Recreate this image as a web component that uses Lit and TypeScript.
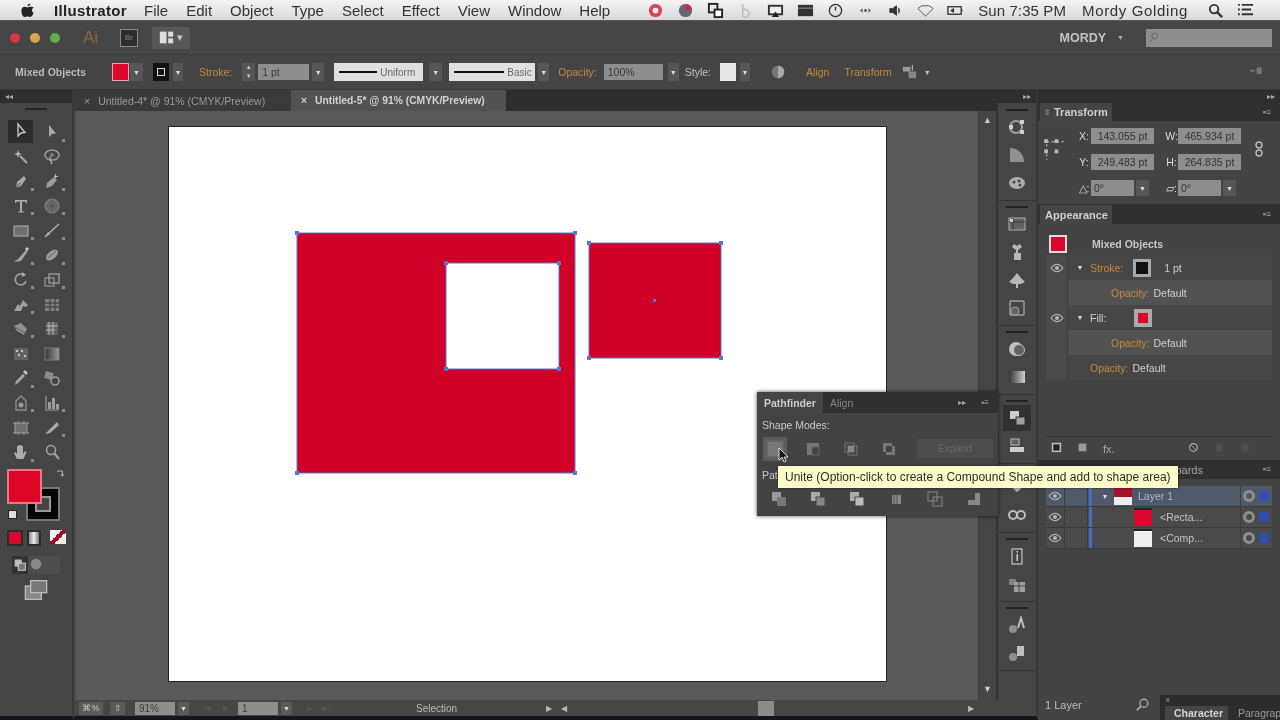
import { LitElement, html, css, svg } from 'lit';
import { customElement } from 'lit/decorators.js';

const ic = (body: unknown, size = 18) => html`<svg width=${size} height=${size} viewBox="0 0 18 18">${body}</svg>`;

// toolbox glyphs, left column then right column per row
const tools: { i: unknown; fly?: boolean; on?: boolean }[] = [
    { on: true, i: svg`<path d="M6 2v12l3-3 4-.5z" fill="none" stroke="#c4c4c4" stroke-width="1.4"/>` },
    { i: svg`<path d="M6 2v12l3-3 4-.5z" fill="#bdbdbd"/>`, fly: true },
    { i: svg`<path d="M8 8l7 7" stroke="#bbb" stroke-width="2"/><path d="M6 2l1 3 3 1-3 1-1 3-1-3-3-1 3-1z" fill="#ccc"/>` },
    { i: svg`<ellipse cx="9" cy="7" rx="7" ry="5" fill="none" stroke="#aaa" stroke-width="1.6"/><path d="M7 9c0 3 1 5 2 7" stroke="#bbb" stroke-width="1.6" fill="none"/><circle cx="9" cy="7" r="2" fill="#888"/>` },
    { i: svg`<path d="M4 15l1-6 7-6 2 3-5 7z" fill="#bbb"/><path d="M4 15l4-5" stroke="#444"/>`, fly: true },
    { i: svg`<path d="M3 15l1-5 7-6 3 3-5 6z" fill="#aaa"/><path d="M12 1h1v4h-1zM11 3h4v1h-4z" fill="#ccc"/>`, fly: true },
    { i: svg`<path d="M3 3h12v3h-1l-1-1.500H10v10h2v1H6v-1h2V4.500H5L4 6H3z" fill="#c0c0c0"/>`, fly: true },
    { i: svg`<circle cx="9" cy="9" r="7" fill="#777" stroke="#999"/><path d="M2 9h14M9 2v14M4 4l10 10M14 4L4 14" stroke="#555"/>`, fly: true },
    { i: svg`<rect x="2" y="4" width="14" height="10" fill="#777" stroke="#aaa" stroke-width="1.400"/>`, fly: true },
    { i: svg`<path d="M2 15L16 2" stroke="#c4c4c4" stroke-width="1.400"/><path d="M2 15l5-3-2-2z" fill="#ccc"/>`, fly: true },
    { i: svg`<path d="M2 16l4-3 8-9 2 1-7 10z" fill="#b5b5b5"/><path d="M13 3l2-2 2 2-2 2z" fill="#e0e0e0"/>`, fly: true },
    { i: svg`<ellipse cx="9" cy="9" rx="7" ry="4" transform="rotate(-40 9 9)" fill="#aaa"/><path d="M5 12l8-7" stroke="#666"/>`, fly: true },
    { i: svg`<path d="M14 10a5.500 5.500 0 1 1-2-6" fill="none" stroke="#a8a8a8" stroke-width="1.800"/><path d="M10 1l4 3-4 2z" fill="#bbb"/>`, fly: true },
    { i: svg`<rect x="2" y="7" width="9" height="8" fill="none" stroke="#999" stroke-width="1.400"/><rect x="6" y="3" width="10" height="9" fill="none" stroke="#aaa" stroke-width="1.400"/>`, fly: true },
    { i: svg`<path d="M2 15l4-7 2 2 3-6 5 5-2 2-3-1-2 5z" fill="#b0b0b0"/>`, fly: true },
    { i: svg`<rect x="2" y="3" width="14" height="12" fill="#888"/><path d="M2 7h14M2 11h14M7 3v12M12 3v12" stroke="#333"/>` },
    { i: svg`<path d="M2 6l7-3 6 6-3 6-7-4z" fill="#a0a0a0"/><path d="M3 7l10 6" stroke="#666"/>`, fly: true },
    { i: svg`<path d="M3 2h12v13H3z" fill="#666"/><path d="M6 2v13M10 2v13M3 6h12M3 10h9" stroke="#ccc"/>`, fly: true },
    { i: svg`<rect x="2" y="3" width="14" height="12" fill="#6a6a6a"/><path d="M4 5h2v2H4zM9 5h2v2H9zM6 9h2v2H6zM12 10h2v2h-2z" fill="#ddd"/>` },
    { i: svg`<defs><linearGradient id="g1"><stop offset="0" stop-color="#333"/><stop offset="1" stop-color="#aaa"/></linearGradient></defs><rect x="2" y="3" width="14" height="12" fill="url(#g1)" stroke="#888"/>` },
    { i: svg`<path d="M3 16l1-4 7-7 2 2-7 7z" fill="#b8b8b8"/><path d="M11 3l2-2 3 3-2 2z" fill="#d8d8d8"/>`, fly: true },
    { i: svg`<rect x="2" y="3" width="8" height="7" transform="rotate(15 6 6)" fill="#999"/><circle cx="12" cy="12" r="4" fill="none" stroke="#aaa" stroke-width="1.600"/>` },
    { i: svg`<path d="M9 2l5 5v9H4V7z" fill="none" stroke="#999" stroke-width="1.400"/><circle cx="9" cy="11" r="2.500" fill="#aaa"/>`, fly: true },
    { i: svg`<path d="M3 2v14h13" fill="none" stroke="#aaa" stroke-width="1.200"/><path d="M5 8h3v7H5zM9 4h3v11H9zM13 10h3v5h-3z" fill="#aaa"/>`, fly: true },
    { i: svg`<rect x="3" y="4" width="12" height="10" fill="#777" stroke="#aaa"/><path d="M1 4h3M14 4h3M1 14h3M14 14h3M6 2v3M12 2v3M6 13v3M12 13v3" stroke="#aaa"/>` },
    { i: svg`<path d="M2 15L14 3l2 3-9 8z" fill="#bbb"/>`, fly: true },
    { i: svg`<path d="M5 16l-3-6 1-1 2 2V3h1.500v6V2H8v7V2h1.500v7V3H11v8l2-3 1.500 1-3 7z" fill="#c0c0c0"/>`, fly: true },
    { i: svg`<circle cx="8" cy="7" r="4.500" fill="none" stroke="#b5b5b5" stroke-width="1.500"/><path d="M11 10l5 6" stroke="#b5b5b5" stroke-width="2"/>` },
];

// panel dock groups
const dockGroups: unknown[][] = [
    [svg`<circle cx="8" cy="9" r="6" fill="none" stroke="#aaa" stroke-width="2"/><rect x="12" y="2" width="4" height="4" fill="#ddd"/><rect x="12" y="12" width="4" height="4" fill="#ddd"/><rect x="1" y="7" width="4" height="4" fill="#ddd"/>`,
     svg`<path d="M2 2c8 0 14 6 14 14H2z" fill="#999"/>`,
     svg`<ellipse cx="9" cy="9" rx="8" ry="6" fill="#bbb"/><circle cx="6" cy="8" r="1.500" fill="#444"/><circle cx="11" cy="7" r="1.500" fill="#444"/><circle cx="12" cy="11" r="1.500" fill="#444"/>`],
    [svg`<rect x="1" y="3" width="16" height="12" fill="#666" stroke="#bbb"/><path d="M1 7h16M5 3v12" stroke="#333"/><rect x="2" y="4" width="3" height="3" fill="#ddd"/>`,
     svg`<path d="M4 4l2-3 3 2 3-2 2 3-4 3v3h3v7H6v-7h2V7z" fill="#c4c4c4"/>`,
     svg`<path d="M9 2l4 5 4 4-4 2H5l-4-2 4-4zM8 13h2v4H8z" fill="#c4c4c4"/>`,
     svg`<rect x="2" y="2" width="14" height="14" rx="1" fill="none" stroke="#aaa" stroke-width="1.400"/><circle cx="7" cy="12" r="4" fill="#666" stroke="#aaa"/>`],
    [svg`<circle cx="8" cy="9" r="7" fill="#cfcfcf"/><circle cx="11" cy="10" r="5.500" fill="#666" stroke="#ccc"/>`,
     svg`<defs><linearGradient id="g2"><stop offset="0" stop-color="#333"/><stop offset="1" stop-color="#ddd"/></linearGradient></defs><rect x="1" y="3" width="16" height="12" fill="url(#g2)"/>`],
    [svg`<rect x="2" y="2" width="9" height="8" fill="#ddd"/><rect x="8" y="8" width="9" height="8" fill="#aaa" stroke="#333"/>`,
     svg`<rect x="3" y="2" width="8" height="6" fill="#666" stroke="#ccc"/><rect x="2" y="10" width="14" height="5" fill="#ddd"/>`],
    [svg`<path d="M2 8h14L9 14z" fill="#bbb"/>`,
     svg`<circle cx="5" cy="9" r="4" fill="none" stroke="#ccc" stroke-width="2"/><circle cx="13" cy="9" r="4" fill="none" stroke="#ccc" stroke-width="2"/>`],
    [svg`<path d="M4 2h10v15H4z" fill="none" stroke="#bbb" stroke-width="1.400"/><path d="M8.500 7h1.500v7H8.500zM8.500 4h1.500v1.500H8.500z" fill="#ddd"/>`,
     svg`<rect x="1" y="4" width="7" height="6" fill="#888"/><rect x="6" y="7" width="11" height="10" fill="#aaa"/><path d="M6 11h11M11 7v10" stroke="#444"/>`],
    [svg`<circle cx="5" cy="13" r="4" fill="#999"/><path d="M10 12l3-10 3 10" fill="none" stroke="#ccc" stroke-width="2"/>`,
     svg`<circle cx="5" cy="13" r="4" fill="#999"/><rect x="9" y="2" width="7" height="10" fill="#ccc"/>`],
];

const pfTop = [
    svg`<rect x="2" y="2" width="14" height="14" fill="#777"/>`,
    svg`<path d="M3 3h12v4H8v8H3z" fill="#777"/><rect x="8" y="7" width="7" height="8" fill="none" stroke="#666"/>`,
    svg`<rect x="3" y="3" width="9" height="9" fill="none" stroke="#777"/><rect x="6" y="6" width="9" height="9" fill="none" stroke="#777"/><rect x="6" y="6" width="6" height="6" fill="#888"/>`,
    svg`<path d="M3 3h9v3H6v6H3zM12 6h3v9H6v-3h6z" fill="#777"/>`,
];
const pfBottom = [
    svg`<rect x="2" y="2" width="9" height="9" fill="#999"/><rect x="7" y="7" width="9" height="9" fill="#777"/>`,
    svg`<rect x="2" y="2" width="9" height="9" fill="#aaa"/><rect x="7" y="7" width="9" height="9" fill="#888" stroke="#444"/>`,
    svg`<rect x="2" y="2" width="9" height="9" fill="#aaa"/><rect x="7" y="7" width="9" height="9" fill="#bbb" stroke="#444"/>`,
    svg`<rect x="5" y="5" width="9" height="9" fill="#888"/><path d="M7 5v9M10 5v9" stroke="#555"/>`,
    svg`<rect x="2" y="2" width="9" height="9" fill="none" stroke="#888"/><rect x="7" y="7" width="9" height="9" fill="none" stroke="#888"/>`,
    svg`<path d="M10 3h5v12H3v-5h7z" fill="#888"/>`,
];

const eye = svg`<path d="M1 7c4-5 8-5 12 0-4 5-8 5-12 0z" fill="none" stroke="#b5b5b5" stroke-width="1.100"/><circle cx="7" cy="7" r="2" fill="#b5b5b5"/>`;
const eyeIcon = html`<svg width="14" height="14" viewBox="0 0 14 14">${eye}</svg>`;

@customElement('app-root')
export class AppRoot extends LitElement {
    static styles = css`
        :host {
            display: block;
            position: relative;
            width: 1280px;
            height: 720px;
            overflow: hidden;
            background: #424242;
            font-family: 'Liberation Sans', Arial, sans-serif;
            font-size: 11px;
            color: #c8c8c8;
            filter: blur(0.7px);
        }
        svg { display: block; flex: none; }

        /* mac menu bar */
        .menu {
            display: flex;
            align-items: center;
            height: 21px;
            padding-left: 19px;
            background: linear-gradient(#f4f4f4, #d9d9d9);
            border-bottom: 1px solid #555;
            box-sizing: border-box;
            color: #222;
            font-size: 15px;
        }
        .menu .apple { width: 27px; margin-right: 8px; }
        .menu b { margin-right: 17px; letter-spacing: .35px; }
        .menu span { margin-right: 18px; color: #333; }
        .extras { display: flex; align-items: center; margin-left: auto; padding-right: 26px; gap: 13px; }
        .extras span { margin: 0; }
        .extras .who { margin-left: 3px; margin-right: 6px; letter-spacing: .65px; }
        .extras .clock { margin-left: 1px; letter-spacing: .1px; }

        /* app bar + control bar */
        .appbar {
            display: flex;
            align-items: center;
            height: 34px;
            padding-left: 10px;
            background: #464646;
            border-bottom: 1px solid #3a3a3a;
            box-sizing: border-box;
        }
        .light { width: 10px; height: 10px; border-radius: 50%; margin-right: 10px; }
        .light.r { background: #d8364a; }
        .light.y { background: #d9a54c; }
        .light.g { background: #5fb04a; }
        .ai { margin-left: 13px; color: #8a6a42; font-size: 17px; width: 28px; }
        .bridge {
            width: 16px;
            height: 16px;
            border: 1px solid #888;
            background: #2d2d2d;
            margin-left: 9px;
            color: #888;
            font-size: 8px;
            line-height: 16px;
            text-align: center;
        }
        .arrange {
            display: flex;
            align-items: center;
            justify-content: center;
            gap: 3px;
            width: 38px;
            height: 22px;
            margin-left: 14px;
            background: #585858;
        }
        .workspace { margin-left: auto; color: #c4c4c4; font-weight: bold; font-size: 12.500px; }
        .workspace-caret { margin-left: 11px; color: #aaa; font-size: 7px; }
        .search {
            width: 126px;
            height: 18px;
            margin: 0 8px 0 22px;
            background: #8e8e8e;
            color: #444;
            display: flex;
            align-items: center;
            padding-left: 3px;
            box-sizing: border-box;
        }

        .control {
            display: flex;
            align-items: center;
            height: 35px;
            padding-left: 15px;
            background: #444;
            border-bottom: 1px solid #383838;
            box-sizing: border-box;
            white-space: nowrap;
        }
        .mixed { width: 97px; font-size: 10.500px; font-weight: bold; color: #bbb; }
        .link { color: #c58a3e; font-size: 10.500px; }
        .lbl { font-size: 10.500px; color: #c4c4c4; }
        .swatch { width: 17px; height: 18px; background: #d9072c; border: 1px solid #e8a0ac; box-sizing: border-box; }
        .blackbox {
            width: 16px;
            height: 18px;
            background: #111;
            display: flex;
            align-items: center;
            justify-content: center;
        }
        .blackbox i { width: 6px; height: 6px; border: 1px solid #ddd; }
        .dd {
            display: flex;
            align-items: center;
            justify-content: center;
            height: 18px;
            background: #565656;
            color: #ddd;
            font-size: 7px;
            font-style: normal;
        }
        .field { height: 16px; line-height: 16px; background: #8e8e8e; color: #3a3a3a; padding-left: 4px; box-sizing: border-box; font-size: 10.500px; }
        .profile {
            display: flex;
            align-items: center;
            gap: 3px;
            height: 18px;
            padding-left: 5px;
            background: #e0e0e0;
            color: #666;
            font-size: 10px;
            box-sizing: border-box;
        }
        .profile i { height: 2px; background: #111; }
        .styleswatch { width: 16px; height: 18px; background: #e8e8e8; }
        .spin { width: 13px; height: 18px; background: #555; color: #ccc; font-size: 6px; line-height: 9px; text-align: center; }
        .w10 { width: 10px; } .w11 { width: 11px; } .w12 { width: 12px; } .w13 { width: 13px; }
        .w38 { width: 38px; } .w50 { width: 50px; } .w51 { width: 51px; } .w59 { width: 59px; } .w86 { width: 86px; } .w89 { width: 89px; }
        .tiny { font-size: 7px; }
        .m1 { margin-left: 1px; } .m3 { margin-left: 3px; } .m4 { margin-left: 4px; } .m5 { margin-left: 5px; }
        .m6 { margin-left: 6px; } .m7 { margin-left: 7px; } .m9 { margin-left: 9px; } .m10 { margin-left: 10px; }
        .m15 { margin-left: 15px; } .m16 { margin-left: 16px; } .m20 { margin-left: 20px; } .m21 { margin-left: 21px; }
        .endmenu { margin-left: auto; margin-right: 15px; color: #999; }

        /* main columns */
        .main { display: flex; height: 630px; }
        .strip { height: 13px; background: #2e2e2e; color: #aaa; font-size: 8px; line-height: 13px; padding: 0 5px; box-sizing: border-box; flex: none; }
        .tools {
            width: 74px;
            flex: none;
            display: flex;
            flex-direction: column;
            align-items: center;
            background: #454545;
            border-right: 2px solid #383838;
            border-bottom: 4px solid #14141c;
            box-sizing: border-box;
        }
        .tools .strip { align-self: stretch; }
        .grip { width: 22px; height: 2px; background: #222; margin: 5px 0 10px; flex: none; }
        .toolgrid { display: grid; grid-template-columns: 31px 31px; grid-auto-rows: 24.620px; }
        .tool { position: relative; display: flex; align-items: center; justify-content: center; opacity: .85; }
        .tool.on { background: #2c2c2c; margin: 0 3px 2px; opacity: 1; }
        .tool.fly::after {
            content: '';
            position: absolute;
            right: 2px;
            bottom: 3px;
            width: 3px;
            height: 3px;
            background: #999;
        }
        .fillstroke { position: relative; width: 62px; height: 56px; margin-top: 4px; flex: none; }
        .fs-stroke {
            position: absolute;
            left: 21px;
            top: 18px;
            width: 34px;
            height: 34px;
            background: #050505;
            border: 2px solid #777;
            box-sizing: border-box;
            display: flex;
            align-items: center;
            justify-content: center;
        }
        .fs-stroke i { width: 12px; height: 12px; background: #454545; border: 2px solid #999; }
        .fs-fill {
            position: absolute;
            left: 2px;
            top: 0;
            width: 35px;
            height: 35px;
            background: #dc0528;
            border: 2px solid #e87a88;
            box-sizing: border-box;
        }
        .fs-swap { position: absolute; right: 0; top: 0; }
        .fs-default { position: absolute; left: 3px; top: 41px; width: 9px; height: 9px; background: #ddd; border: 1px solid #222; box-sizing: border-box; }
        .modes { display: flex; gap: 4px; margin-top: 5px; flex: none; }
        .modes i { display: block; width: 16px; height: 16px; padding: 0; background: #2b2b2b; position: relative; }
        .modes i.red { background: #d9072c; border: 2px solid #2b2b2b; width: 12px; height: 12px; }
        .modes i.grad { background: linear-gradient(90deg, #888, #eee, #777); border: 2px solid #2b2b2b; width: 10px; height: 12px; }
        .modes i.none { background: linear-gradient(135deg, #eee 40%, #a00c28 40%, #a00c28 60%, #eee 60%); width: 16px; height: 14px; margin-left: 5px; }
        .draw { display: flex; align-items: center; margin-top: 10px; flex: none; }
        .draw b { display: block; width: 16px; height: 18px; background: #333; }
        .draw u { display: block; width: 32px; height: 18px; background: #4d4d4d; }
        .screen { margin-top: 4px; flex: none; }

        .doc { width: 924px; flex: none; display: flex; flex-direction: column; }
        .tabs { display: flex; height: 21px; background: #2e2e2e; flex: none; }
        .tab {
            display: flex;
            align-items: center;
            gap: 8px;
            width: 217px;
            padding-left: 10px;
            box-sizing: border-box;
            background: #3a3a3a;
            color: #9a9a9a;
            font-size: 10.500px;
            white-space: nowrap;
        }
        .tab.on { background: #525252; color: #d2d2d2; font-weight: bold; width: 215px; }
        .tab.on span { font-size: 10.300px; }
        .work { display: flex; flex: 1; min-height: 0; }
        .canvas { flex: 1; background: #595959; padding: 15px 0 0 94px; box-sizing: border-box; border-left: 2px solid #4d4d4d; }
        .artboard { width: 719px; height: 556px; margin-left: -2px; background: #fff; border: 1px solid #222; box-sizing: border-box; }
        .vscroll {
            width: 20px;
            background: #454545;
            border-left: 1px solid #3a3a3a;
            border-right: 2px solid #333;
            box-sizing: border-box;
            display: flex;
            flex-direction: column;
            justify-content: space-between;
            align-items: center;
            color: #ccc;
            font-size: 9px;
            padding: 4px 0 6px;
        }
        .status {
            display: flex;
            align-items: center;
            height: 20px;
            padding-left: 5px;
            background: #464646;
            border-bottom: 4px solid #14141c;
            box-sizing: border-box;
            color: #bbb;
            font-size: 10px;
            flex: none;
            white-space: nowrap;
        }
        .status .field { height: 13px; line-height: 13px; font-size: 10px; }
        .f40 { width: 40px; }
        .st-ico { width: 24px; height: 13px; background: #5a5a5a; text-align: center; line-height: 13px; font-size: 9px; color: #ccc; }
        .st-ico.small { width: 15px; }
        .st-dd { width: 11px; height: 13px; background: #5a5a5a; text-align: center; color: #ddd; font-size: 7px; line-height: 13px; }
        .nav { color: #555; width: 17px; text-align: center; font-size: 8px; }
        .sel { margin-left: 81px; width: 130px; }
        .st-right { color: #bbb; font-size: 8px; }
        .hthumb { width: 16px; height: 15px; background: #8b8b8b; margin-left: 191px; }
        .st-end { margin-left: 194px; color: #bbb; font-size: 8px; }

        .dock {
            width: 40px;
            flex: none;
            display: flex;
            flex-direction: column;
            align-items: center;
            background: #454545;
            border-right: 2px solid #373737;
            border-bottom: 4px solid #14141c;
            box-sizing: border-box;
        }
        .dock .strip { align-self: stretch; text-align: right; }
        .dock-group {
            align-self: stretch;
            display: flex;
            flex-direction: column;
            align-items: center;
            gap: 8px;
            padding: 5px 0 7px;
            border-bottom: 1px solid #333;
        }
        .strip + .dock-group { padding-top: 6px; }
        .dock-group::before { content: ''; width: 22px; height: 2px; background: #222; margin-bottom: -2px; }
        .dock-item { width: 22px; height: 20px; display: flex; align-items: center; justify-content: center; opacity: .9; }
        .dock-item.on { background: #2f2f2f; width: 28px; height: 26px; margin: -3px 0; }

        .panels { flex: 1; display: flex; flex-direction: column; background: #434343; min-width: 0; }
        .panels > .strip { text-align: right; }
        .phead { display: flex; height: 19px; background: #303030; flex: none; align-items: stretch; }
        .phead.short { height: 18px; }
        .phead b {
            display: flex;
            align-items: center;
            width: 72px;
            margin-left: 2px;
            padding-left: 5px;
            box-sizing: border-box;
            background: #454545;
            color: #cfcfcf;
            font-size: 11px;
        }
        .phead.short b { padding-left: 4px; gap: 3px; }
        .phead.short b small { font-size: 8px; color: #999; font-weight: normal; }
        .phead em { margin-left: auto; padding: 4px 9px 0 0; color: #999; font-size: 9px; font-style: normal; }
        .transform { height: 102px; flex: none; border-bottom: 1px solid #333; box-sizing: border-box; }
        .tf-body {
            display: grid;
            grid-template-columns: 22px 14px 63px 11px 13px 63px 1fr;
            grid-auto-rows: 16px;
            row-gap: 10px;
            align-items: center;
            padding: 7px 0 0 5px;
            margin-left: 12px;
        }
        .tf-ref { grid-row: 1 / span 2; grid-column: 1; align-self: center; margin-left: -12px; }
        .tf-link { grid-row: 1 / span 2; grid-column: 7; justify-self: center; align-self: center; margin-left: -4px; }
        .tf-lab { color: #ddd; font-size: 10.500px; text-align: center; }
        .tf-lab.c2 { grid-column: 2; }
        .tf-lab.c5 { grid-column: 5; }
        .tf-field { height: 16px; line-height: 16px; background: #8e8e8e; color: #333; font-size: 10.500px; text-align: center; }
        .tf-ang { display: flex; gap: 2px; align-items: center; }
        .tf-ang .tf-field { width: 43px; text-align: left; padding-left: 3px; box-sizing: border-box; }
        .tf-ang .dd { width: 13px; height: 16px; }
        .c3 { grid-column: 3; }
        .c6 { grid-column: 6; }

        .appearance { height: 255px; flex: none; display: flex; flex-direction: column; }
        .ap-list { margin: 8px 8px 0; flex: 1; border-bottom: 1px solid #333; display: flex; flex-direction: column; align-items: stretch; }
        .ap-row { display: flex; align-items: center; height: 25px; font-size: 10.500px; color: #cfcfcf; background: #464646; white-space: nowrap; flex: none; }
        .ap-row.hi { background: #525252; }
        .ap-row .eye { width: 21px; display: flex; justify-content: center; flex: none; align-self: stretch; align-items: center; background: #4a4a4a; border-right: 1px solid #3c3c3c; }
        .ap-row .tri { width: 20px; flex: none; text-align: center; font-size: 7px; color: #ddd; margin-left: 2px; }
        .ap-row .link { margin-right: 4px; }
        .ap-thumb { width: 18px; height: 18px; border: 3px solid #aaa; background: #111; margin-left: 6px; margin-right: 13px; flex: none; box-sizing: border-box; }
        .ap-thumb.fill { background: #d9072c; border: 4px solid #aaa; margin-left: 28px; }
        .ap-title { display: flex; align-items: center; height: 23px; font-weight: bold; font-size: 10.500px; background: #434343; flex: none; }
        .ap-title i { width: 18px; height: 18px; background: #d9072c; border: 2px solid #ddd; box-sizing: border-box; margin: 0 25px 0 3px; }
        .pad1 { padding-left: 43px; } .pad2 { padding-left: 22px; }
        .ap-foot { display: flex; align-items: center; height: 23px; gap: 12px; padding-left: 13px; flex: none; color: #aaa; }
        .ap-foot .sp { margin-left: auto; }
        .ap-foot .end { margin-right: 26px; }

        .layers { flex: 1; display: flex; flex-direction: column; position: relative; min-height: 0; }
        .layers .phead b { background: #303030; color: #a8a8a8; width: 165px; justify-content: flex-end; padding: 0; margin: 0; font-weight: normal; }
        .ly-list { margin: 7px 8px 0; flex: 1; }
        .ly-row { display: flex; align-items: center; height: 21px; background: #4a4a4a; border-bottom: 1px solid #3a3a3a; box-sizing: border-box; color: #c4c4c4; font-size: 10.500px; }
        .ly-row.top { background: #50596a; color: #a9b9d2; }
        .ly-row .eye { width: 18px; display: flex; justify-content: center; }
        .ly-row .lock { width: 24px; align-self: stretch; border-left: 1px solid #3c3c3c; border-right: 1px solid #3c3c3c; box-sizing: border-box; }
        .ly-bar { width: 3px; align-self: stretch; background: #4a68c8; flex: none; margin-left: 1px; }
        .ly-tri { width: 18px; margin-left: 4px; color: #ddd; font-size: 7px; text-align: center; }
        .ly-thumb { width: 18px; height: 18px; margin-right: 8px; flex: none; }
        .ly-thumb.layer { background: linear-gradient(#a8102c 55%, #eee 55%); margin-right: 6px; }
        .ly-thumb.red { background: #d9072c; border-top: 2px solid #222; box-sizing: border-box; margin-left: 42px; }
        .ly-thumb.white { background: #eee; border-top: 2px solid #222; box-sizing: border-box; margin-left: 42px; }
        .ly-end { margin-left: auto; display: flex; align-items: center; gap: 4px; padding-right: 3px; align-self: stretch; border-left: 1px solid #3c3c3c; padding-left: 2px; }
        .ly-end i { width: 12px; height: 12px; border-radius: 50%; border: 3px solid #8f8f8f; box-sizing: border-box; }
        .ly-end u { width: 10px; height: 10px; background: #2d50b0; border-radius: 2px; display: flex; }
        .ly-foot { display: flex; align-items: center; height: 22px; padding-left: 7px; font-size: 11px; color: #bbb; flex: none; margin-bottom: 4px; }
        .ly-foot svg { margin-left: 53px; }
        .chardock {
            position: absolute;
            right: 0;
            bottom: 0;
            width: 120px;
            height: 25px;
            background: #2c2c2c;
            color: #999;
            font-size: 9px;
            padding: 0 0 0 5px;
            box-sizing: border-box;
        }
        .chartabs { display: flex; position: absolute; left: 5px; right: 0; bottom: 0; height: 14px; line-height: 14px; overflow: hidden; font-size: 10.500px; }
        .chartabs b { width: 63px; padding-left: 9px; box-sizing: border-box; background: #454545; color: #d5d5d5; flex: none; }
        .chartabs span { padding-left: 10px; color: #999; white-space: nowrap; }

        /* floating pathfinder + tooltip */
        .pathfinder {
            position: absolute;
            left: 757px;
            top: 392px;
            width: 241px;
            height: 124px;
            background: #434343;
            box-shadow: 0 0 4px rgba(0, 0, 0, .7);
            display: flex;
            flex-direction: column;
        }
        .pf-head { display: flex; align-items: stretch; height: 21px; background: #303030; }
        .pf-head b { display: flex; align-items: center; padding: 0 7px; background: #454545; font-size: 10.500px; color: #cdcdcd; }
        .pf-head span { display: flex; align-items: center; padding-left: 7px; color: #888; font-size: 10.500px; }
        .pf-head em { margin-left: auto; padding: 6px 9px 0 0; color: #aaa; font-size: 8px; font-style: normal; white-space: pre; }
        .pf-label { padding: 6px 0 0 5px; font-size: 10.500px; color: #c8c8c8; height: 19px; box-sizing: border-box; }
        .pf-row { display: flex; align-items: center; padding-left: 9px; gap: 20px; margin-top: 7px; }
        .pf-expand { width: 76px; height: 19px; margin-left: -1px; background: #4c4c4c; color: #6a6a6a; font-size: 10px; line-height: 19px; text-align: center; }
        .pf-hot { background: #666; box-shadow: 0 0 0 3px #5c5c5c; }
        .pf-row2 { display: flex; align-items: center; padding-left: 13px; gap: 21px; margin-top: 32px; }
        .pf-peek { position: absolute; left: 5px; top: 77px; font-size: 10.500px; }
        .cursor { position: absolute; left: 778px; top: 447px; }
        .tooltip {
            position: absolute;
            left: 778px;
            top: 466px;
            width: 400px;
            height: 22px;
            line-height: 22px;
            padding-left: 7px;
            box-sizing: border-box;
            background: #fdfdc9;
            color: #2c2c2c;
            font-size: 12px;
            white-space: nowrap;
            box-shadow: 0 0 2px rgba(0, 0, 0, .6);
        }
    `;

    renderMenu() {
        const items = ['File', 'Edit', 'Object', 'Type', 'Select', 'Effect', 'View', 'Window', 'Help'];
        return html`
            <div class="menu">
                <div class="apple">${ic(svg`<path d="M12 5c-1 0-2 .7-3 .7S7 5 6 5C4 5 2.500 7 2.500 9.500c0 3 2 6.500 3.500 6.500 1 0 1.500-.7 3-.7s2 .7 3 .7c1.500 0 3-3 3.500-4.500-2-1-2.500-4.500 0-5.500C15 5.500 13.500 5 12 5zM9 4.500C9 3 10.200 1.500 12 1.500 12 3 10.800 4.500 9 4.500z" fill="#222"/>`, 17)}</div>
                <b>Illustrator</b>
                ${items.map(m => html`<span>${m}</span>`)}
                <div class="extras">
                    ${ic(svg`<circle cx="9" cy="9" r="7" fill="#e0405a"/><circle cx="9" cy="9" r="3" fill="#fff"/>`, 17)}
                    ${ic(svg`<circle cx="9" cy="9" r="7" fill="#667"/><path d="M9 2a7 7 0 0 1 7 7H9z" fill="#c03048"/>`, 17)}
                    ${ic(svg`<rect x="2" y="2" width="9" height="9" fill="none" stroke="#222" stroke-width="2"/><rect x="8" y="8" width="8" height="8" fill="#fff" stroke="#222" stroke-width="2"/>`, 17)}
                    ${ic(svg`<path d="M6 2v13M6 9a4 4 0 1 1 0 6" fill="none" stroke="#bbb" stroke-width="1.500"/>`, 17)}
                    ${ic(svg`<rect x="1" y="3" width="16" height="11" fill="#333"/><rect x="3" y="5" width="12" height="7" fill="#eee"/><path d="M5 16l4-6 4 6z" fill="#222"/>`, 17)}
                    ${ic(svg`<rect x="1" y="3" width="16" height="12" fill="#333"/><rect x="1" y="6" width="16" height="1" fill="#999"/>`, 17)}
                    ${ic(svg`<circle cx="9" cy="9" r="6.500" fill="none" stroke="#333" stroke-width="1.400"/><path d="M9 5v4" stroke="#333" stroke-width="1.400"/>`, 17)}
                    ${ic(svg`<path d="M3 9l3-2.500v5zM15 9l-3-2.500v5z" fill="#666"/><circle cx="9" cy="9" r="1.500" fill="#555"/>`, 17)}
                    ${ic(svg`<path d="M3 7h3l4-3v10l-4-3H3zM12 6c1.500 1.500 1.500 4.500 0 6" fill="#333" stroke="#333"/>`, 17)}
                    ${ic(svg`<path d="M1 7l4-3h8l4 3-8 8z" fill="none" stroke="#555"/>`, 17)}
                    ${ic(svg`<rect x="1" y="5" width="14" height="8" fill="none" stroke="#333" stroke-width="1.400"/><path d="M4 9l3-2v4zM16 8v2" fill="#333" stroke="#333"/>`, 17)}
                    <span class="clock">Sun 7:35 PM</span>
                    <span class="who">Mordy Golding</span>
                    ${ic(svg`<circle cx="7.500" cy="7.500" r="4.500" fill="none" stroke="#333" stroke-width="2"/><path d="M11 11l5 5" stroke="#333" stroke-width="2.500"/>`, 17)}
                    ${ic(svg`<path d="M1 3h2M5 3h12M1 8h2M5 8h10M1 13h2M5 13h12" stroke="#333" stroke-width="2"/>`, 17)}
                </div>
            </div>`;
    }

    renderAppBar() {
        return html`
            <div class="appbar">
                <i class="light r"></i><i class="light y"></i><i class="light g"></i>
                <span class="ai">Ai</span>
                <div class="bridge">Br</div>
                <div class="arrange">
                    ${ic(svg`<rect x="1" y="2" width="8" height="14" fill="#ddd"/><rect x="11" y="2" width="6" height="6" fill="#ddd"/><rect x="11" y="10" width="6" height="6" fill="#ddd"/>`, 15)}
                    <span>▾</span>
                </div>
                <span class="workspace">MORDY</span>
                <span class="workspace-caret">▼</span>
                <div class="search">${ic(svg`<circle cx="8" cy="7" r="4" fill="none" stroke="#555"/><path d="M5 10l-3 5" stroke="#555"/>`, 13)}</div>
            </div>`;
    }

    renderControl() {
        return html`
            <div class="control">
                <span class="mixed">Mixed Objects</span>
                <div class="swatch"></div>
                <i class="dd w13 m1">▼</i>
                <div class="blackbox m10"><i></i></div>
                <i class="dd w10 m4">▼</i>
                <span class="link m16">Stroke:</span>
                <div class="spin m10">▲<br />▼</div>
                <div class="field m3 w51">1 pt</div>
                <i class="dd w12 m3">▼</i>
                <div class="profile m10 w89"><i class="w38"></i>Uniform</div>
                <i class="dd w13 m6">▼</i>
                <div class="profile m7 w86"><i class="w50"></i>Basic</div>
                <i class="dd w11 m3">▼</i>
                <span class="link m9">Opacity:</span>
                <div class="field m7 w59">100%</div>
                <i class="dd w11 m5">▼</i>
                <span class="lbl m6">Style:</span>
                <div class="styleswatch m9"></div>
                <i class="dd w10 m4">▼</i>
                <div class="m20">${ic(svg`<circle cx="9" cy="9" r="7" fill="#777"/><path d="M9 2a7 7 0 0 1 0 14z" fill="#aaa"/>`, 16)}</div>
                <span class="link m20">Align</span>
                <span class="link m15">Transform</span>
                <div class="m9">${ic(svg`<rect x="2" y="3" width="8" height="5" fill="#999"/><rect x="8" y="8" width="8" height="7" fill="#888"/><path d="M12 1v6" stroke="#ccc"/>`, 17)}</div>
                <span class="m6 tiny">▼</span>
                <div class="endmenu">${ic(svg`<path d="M1 7h5M3 5l-2 2 2 2" stroke="#999" fill="none"/><rect x="8" y="3" width="6" height="8" fill="#777"/>`, 15)}</div>
            </div>`;
    }

    renderTools() {
        return html`
            <div class="tools">
                <div class="strip">◂◂</div>
                <div class="grip"></div>
                <div class="toolgrid">
                    ${tools.map(t => html`<div class="tool ${t.on ? 'on' : ''} ${t.fly ? 'fly' : ''}">${ic(t.i)}</div>`)}
                </div>
                <div class="fillstroke">
                    <div class="fs-stroke"><i></i></div>
                    <div class="fs-fill"></div>
                    <div class="fs-swap">${ic(svg`<path d="M3 3h8v7M9 8l2 3 2-3" fill="none" stroke="#bbb" stroke-width="1.500"/>`, 12)}</div>
                    <div class="fs-default"></div>
                </div>
                <div class="modes"><i class="red"></i><i class="grad"></i><i class="none"></i></div>
                <div class="draw">
                    <b>${ic(svg`<rect x="3" y="4" width="8" height="8" fill="#bbb"/><rect x="7" y="8" width="8" height="8" fill="#777" stroke="#ddd"/>`, 16)}</b>
                    <u>${ic(svg`<circle cx="9" cy="9" r="6" fill="#888"/>`, 16)}</u>
                </div>
                <div class="screen">${ic(svg`<rect x="1" y="6" width="12" height="10" fill="#888" stroke="#bbb"/><rect x="5" y="2" width="12" height="9" fill="#777" stroke="#bbb"/>`, 24)}</div>
            </div>`;
    }

    renderArtwork() {
        const blue = '#5577cc';
        const anchors = [[128, 106], [406, 106], [128, 346], [406, 346], [277, 136], [390, 136], [277, 242], [390, 242], [420, 116], [552, 116], [420, 231], [552, 231]];
        return html`
            <svg width="717" height="554" viewBox="0 0 717 554">
                <path d="M128 106h278v240H128zM277 136v106h113V136z" fill="#d10029" fill-rule="evenodd" stroke=${blue} />
                <rect x="420" y="116" width="132" height="115" fill="#d10029" stroke=${blue} />
                ${anchors.map(([x, y]) => svg`<rect x=${x - 2} y=${y - 2} width="4" height="4" fill=${blue} />`)}
                <rect x="484" y="172" width="3" height="3" fill=${blue} />
            </svg>`;
    }

    renderDoc() {
        return html`
            <div class="doc">
                <div class="tabs">
                    <div class="tab"><span>×</span><span>Untitled-4* @ 91% (CMYK/Preview)</span></div>
                    <div class="tab on"><span>×</span><span>Untitled-5* @ 91% (CMYK/Preview)</span></div>
                </div>
                <div class="work">
                    <div class="canvas"><div class="artboard">${this.renderArtwork()}</div></div>
                    <div class="vscroll"><span>▲</span><span>▼</span></div>
                </div>
                <div class="status">
                    <div class="st-ico">⌘%</div>
                    <div class="st-ico small m7">⇧</div>
                    <div class="field f40 m10">91%</div>
                    <div class="st-dd m3">▼</div>
                    <span class="nav m9">|◀</span><span class="nav">◀</span>
                    <div class="field f40 m6">1</div>
                    <div class="st-dd m3">▼</div>
                    <span class="nav m9">▶</span><span class="nav">▶|</span>
                    <span class="sel">Selection</span>
                    <span class="st-right">▶</span>
                    <span class="st-right m9">◀</span>
                    <div class="hthumb"></div>
                    <span class="st-end">▶</span>
                </div>
            </div>`;
    }

    renderDock() {
        return html`
            <div class="dock">
                <div class="strip">▸▸</div>
                ${dockGroups.map(g => html`
                    <div class="dock-group">
                        ${g.map(i => html`<div class="dock-item ${i === dockGroups[3][0] ? 'on' : ''}">${ic(i)}</div>`)}
                    </div>`)}
            </div>`;
    }

    renderTransform() {
        const field = (c: string, v: string) => html`<div class="tf-field ${c}">${v}</div>`;
        return html`
            <div class="transform">
                <div class="phead short"><b><small>⇕</small>Transform</b><em>▪≡</em></div>
                <div class="tf-body">
                    <div class="tf-ref">${ic(svg`<path d="M3 3h16v16H3z" fill="none" stroke="#aaa" stroke-dasharray="2 2"/><path d="M1 1h3v3H1zM9.500 1h3v3h-3zM18 1h3v3h-3zM1 9.500h3v3H1zM9.500 9.500h3v3h-3zM18 9.500h3v3h-3zM1 18h3v3H1zM9.500 18h3v3h-3zM18 18h3v3h-3z" fill="#bbb"/>`, 22)}</div>
                    <span class="tf-lab c2">X:</span>${field('c3', '143.055 pt')}
                    <span class="tf-lab c5">W:</span>${field('c6', '465.934 pt')}
                    <div class="tf-link">${ic(svg`<rect x="6" y="2" width="6" height="6" rx="3" fill="none" stroke="#bbb" stroke-width="1.400"/><rect x="6" y="10" width="6" height="6" rx="3" fill="none" stroke="#bbb" stroke-width="1.400"/>`, 18)}</div>
                    <span class="tf-lab c2">Y:</span>${field('c3', '249.483 pt')}
                    <span class="tf-lab c5">H:</span>${field('c6', '264.835 pt')}
                    <span class="tf-lab c2">△:</span>
                    <div class="tf-ang c3"><div class="tf-field">0°</div><i class="dd">▼</i></div>
                    <span class="tf-lab c5">▱:</span>
                    <div class="tf-ang c6"><div class="tf-field">0°</div><i class="dd">▼</i></div>
                </div>
            </div>`;
    }

    renderAppearance() {
        return html`
            <div class="appearance">
                <div class="phead"><b>Appearance</b><em>▪≡</em></div>
                <div class="ap-list">
                    <div class="ap-title"><i></i>Mixed Objects</div>
                    <div class="ap-row"><div class="eye">${eyeIcon}</div><span class="tri">▼</span><span class="link">Stroke:</span><div class="ap-thumb"></div>1 pt</div>
                    <div class="ap-row hi"><div class="eye"></div><span class="pad1"></span><span class="link">Opacity:</span>Default</div>
                    <div class="ap-row"><div class="eye">${eyeIcon}</div><span class="tri">▼</span><span>Fill:</span><div class="ap-thumb fill"></div></div>
                    <div class="ap-row hi"><div class="eye"></div><span class="pad1"></span><span class="link">Opacity:</span>Default</div>
                    <div class="ap-row"><div class="eye"></div><span class="pad2"></span><span class="link">Opacity:</span>Default</div>
                </div>
                <div class="ap-foot">
                    ${ic(svg`<rect x="2" y="2" width="10" height="10" fill="#222" stroke="#bbb" stroke-width="2"/>`, 14)}
                    ${ic(svg`<rect x="2" y="2" width="10" height="10" fill="#999"/>`, 14)}
                    <span>fx.</span>
                    <div class="sp">${ic(svg`<circle cx="7" cy="7" r="5" fill="none" stroke="#aaa" stroke-width="1.500"/><path d="M3 3l8 8" stroke="#aaa"/>`, 14)}</div>
                    ${ic(svg`<rect x="3" y="2" width="8" height="10" fill="#4f4f4f"/>`, 14)}
                    <div class="end">${ic(svg`<rect x="3" y="3" width="8" height="9" fill="#4f4f4f"/>`, 14)}</div>
                </div>
            </div>`;
    }

    renderLayers() {
        const end = html`<div class="ly-end"><i></i><u></u></div>`;
        const bar = html`<div class="eye">${eyeIcon}</div><div class="lock"></div><div class="ly-bar"></div>`;
        return html`
            <div class="layers">
                <div class="phead"><b>Layers &nbsp; Artboards</b><em>▪≡</em></div>
                <div class="ly-list">
                    <div class="ly-row top">${bar}<span class="ly-tri">▼</span><div class="ly-thumb layer"></div>Layer 1${end}</div>
                    <div class="ly-row">${bar}<div class="ly-thumb red"></div>&lt;Recta...${end}</div>
                    <div class="ly-row">${bar}<div class="ly-thumb white"></div>&lt;Comp...${end}</div>
                </div>
                <div class="ly-foot">1 Layer
                    ${ic(svg`<circle cx="10" cy="7" r="4.500" fill="none" stroke="#aaa" stroke-width="1.500"/><path d="M7 10l-5 5" stroke="#aaa" stroke-width="2"/>`, 16)}
                </div>
                <div class="chardock">×
                    <div class="chartabs"><b>Character</b><span>Paragraph</span></div>
                </div>
            </div>`;
    }

    renderPathfinder() {
        return html`
            <div class="pathfinder">
                <div class="pf-head"><b>Pathfinder</b><span>Align</span><em>▸▸       ▪≡</em></div>
                <div class="pf-label">Shape Modes:</div>
                <div class="pf-row">
                    ${pfTop.map((p, i) => html`<div class=${i === 0 ? 'pf-hot' : ''}>${ic(p)}</div>`)}
                    <div class="pf-expand">Expand</div>
                </div>
                <span class="pf-peek">Pathfinders:</span>
                <div class="pf-row2">${pfBottom.map(p => ic(p))}</div>
            </div>
            <div class="cursor">
                <svg width="12" height="16" viewBox="0 0 12 16"><path d="M1 1v12l3-3 2 5 2-1-2-4h4z" fill="#111" stroke="#fff" stroke-width=".8" /></svg>
            </div>
            <div class="tooltip">Unite (Option-click to create a Compound Shape and add to shape area)</div>`;
    }

    render() {
        return html`
            ${this.renderMenu()}
            ${this.renderAppBar()}
            ${this.renderControl()}
            <div class="main">
                ${this.renderTools()}
                ${this.renderDoc()}
                ${this.renderDock()}
                <div class="panels">
                    <div class="strip">▸▸</div>
                    ${this.renderTransform()}
                    ${this.renderAppearance()}
                    ${this.renderLayers()}
                </div>
            </div>
            ${this.renderPathfinder()}
        `;
    }
}
